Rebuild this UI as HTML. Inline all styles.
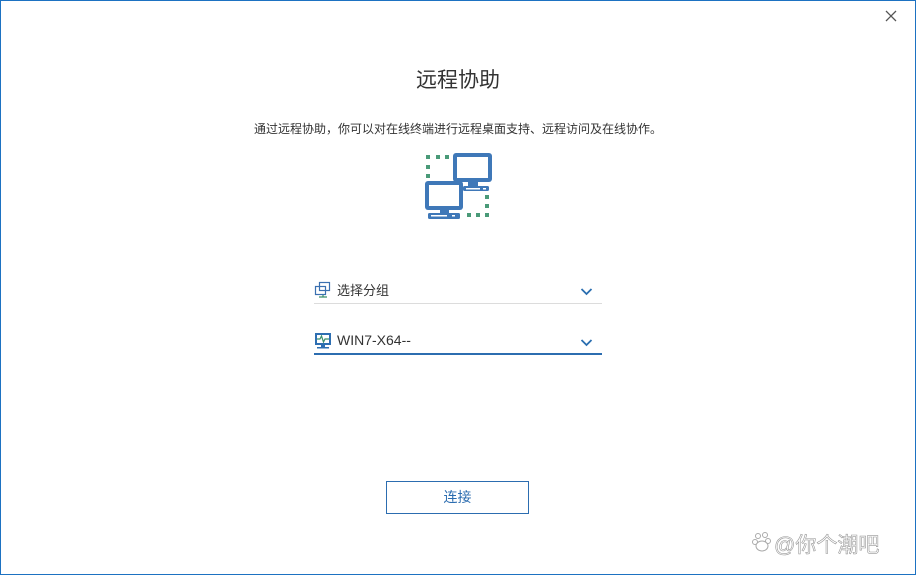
<!DOCTYPE html>
<html><head><meta charset="utf-8"><style>
html,body{margin:0;padding:0;}
body{width:916px;height:575px;position:relative;background:#fff;font-family:"Liberation Sans","Noto Sans CJK SC",sans-serif;overflow:hidden;}
.frame{position:absolute;left:0;top:0;width:914px;height:573px;border:1px solid #1d72c2;}
.abs{position:absolute;}
</style></head><body>
<div class="frame"></div>
<svg class="abs" style="left:884px;top:9px" width="14" height="14" viewBox="0 0 14 14"><path d="M2 2L12 12M12 2L2 12" stroke="#555" stroke-width="1.3"/></svg>
<div class="abs" style="left:0;width:916px;top:64px;text-align:center;font-size:21px;color:#333;">远程协助</div>
<div class="abs" style="left:0;width:916px;top:120px;text-align:center;font-size:12px;color:#333;">通过远程协助，你可以对在线终端进行远程桌面支持、远程访问及在线协作。</div>
<svg class="abs" style="left:0;top:0" width="916" height="575">
<g fill="#4a9a78">
<rect x="426" y="155" width="4" height="4"/><rect x="436" y="155" width="4" height="4"/><rect x="445" y="155" width="4" height="4"/>
<rect x="426" y="165" width="4" height="4"/><rect x="426" y="174" width="4" height="4"/>
<rect x="485" y="195" width="4" height="4"/><rect x="485" y="204" width="4" height="4"/>
<rect x="467" y="213" width="4" height="4"/><rect x="476" y="213" width="4" height="4"/><rect x="485" y="213" width="4" height="4"/>
</g>
<g fill="#3f78b8">
<rect x="453" y="153" width="39" height="29" rx="3"/>
<rect x="468" y="182" width="10" height="4"/>
<rect x="463" y="186" width="26" height="5" rx="1.5"/>
<rect x="425" y="181" width="38" height="29" rx="3"/>
<rect x="440" y="210" width="9" height="3"/>
<rect x="428" y="213" width="32" height="6" rx="1.5"/>
</g>
<rect x="457" y="157" width="31" height="21" fill="#fff"/>
<rect x="429" y="185" width="30" height="21" fill="#fff"/>
<rect x="466" y="188" width="14" height="1.5" fill="#fff"/><rect x="483" y="188" width="3" height="1.5" fill="#fff"/>
<rect x="431" y="215" width="16" height="1.5" fill="#fff"/><rect x="452" y="215" width="3" height="1.5" fill="#fff"/>
<g fill="none" stroke="#3a70b0" stroke-width="1.2">
<rect x="319.5" y="282.5" width="10" height="8"/>
<rect x="315.5" y="286.5" width="10" height="8"/>
</g>
<path d="M319 297h8M323 295v2" stroke="#3b8f6a" stroke-width="1.2"/>
<rect x="315" y="333" width="16" height="12" fill="#2e6fb2"/>
<rect x="317" y="335" width="12" height="8" fill="#fff"/>
<path d="M317 339h3l1.5-3 2 6 1.5-3h4" stroke="#3b8f6a" stroke-width="1.2" fill="none"/>
<rect x="321" y="345" width="4" height="2" fill="#2e6fb2"/><rect x="317" y="347" width="12" height="1.5" fill="#2e6fb2"/>
<path d="M581.5 289l5 5 5-5" stroke="#2a6eb0" stroke-width="1.8" fill="none"/>
<path d="M581.5 340l5 5 5-5" stroke="#2a6eb0" stroke-width="1.8" fill="none"/>
<rect x="314" y="303" width="288" height="1" fill="#dcdcdc"/>
<rect x="314" y="353" width="288" height="2" fill="#2c6db0"/>
<g fill="#fff" stroke="#aaa" stroke-width="1">
<circle cx="758" cy="536" r="2.5"/><circle cx="765" cy="535" r="2.5"/><circle cx="755" cy="542" r="2.5"/><circle cx="768" cy="541" r="2.5"/>
<ellipse cx="762" cy="546" rx="6" ry="5"/>
</g>
</svg>
<div class="abs" style="left:337px;top:280px;font-size:13px;color:#333;">选择分组</div>
<div class="abs" style="left:337px;top:332px;font-size:14px;color:#333;">WIN7-X64--</div>
<div class="abs" style="left:386px;top:481px;width:141px;height:31px;border:1px solid #2c6db0;text-align:center;line-height:31px;font-size:14px;color:#2c6db0;">连接</div>
<div class="abs" style="left:774px;top:529px;font-size:21px;color:#fff;-webkit-text-stroke:0.6px #999;">@你个潮吧</div>
</body></html>
